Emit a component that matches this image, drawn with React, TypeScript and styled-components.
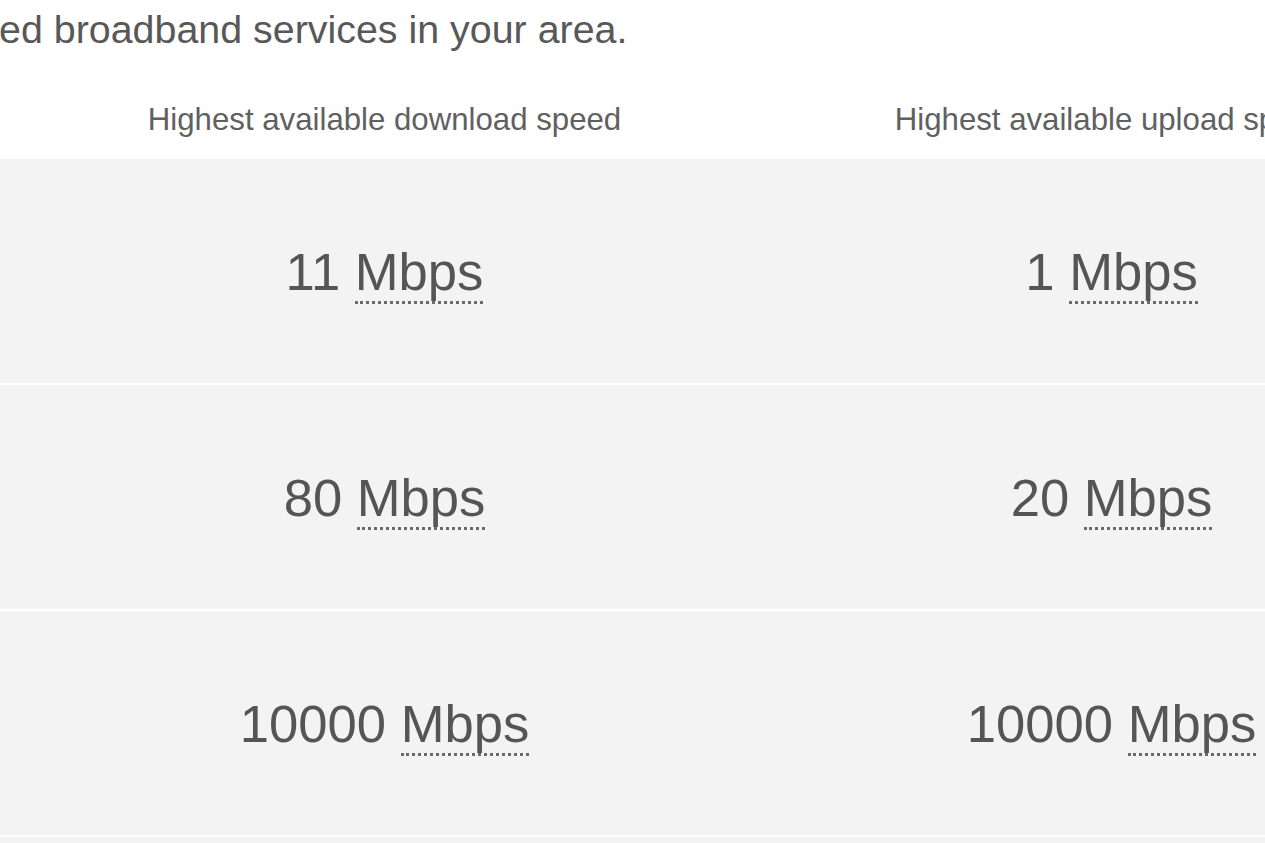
import React from "react";
import styled, { createGlobalStyle } from "styled-components";

const Global = createGlobalStyle`
  html, body {
    margin: 0;
    padding: 0;
    background: #ffffff;
    overflow: hidden;
  }
  body {
    font-family: "Liberation Sans", Arial, sans-serif;
    color: #555555;
  }
`;

const Page = styled.div`
  width: 1265px;
  height: 843px;
  overflow: hidden;
  display: flex;
  flex-direction: column;
`;

const Intro = styled.p`
  margin: 0;
  padding: 7px 0 0 0;
  margin-left: -1px;
  font-size: 39.4px;
  line-height: normal;
  color: #585858;
  white-space: nowrap;
`;

const Grid = styled.div`
  display: grid;
  grid-template-columns: 21px 727px 727px;
`;

const HeaderRow = styled(Grid)`
  padding: 50px 0 21px;
`;

const HeaderCell = styled.div<{ $col: number }>`
  grid-column: ${(p) => p.$col};
  text-align: center;
  font-size: 31.2px;
  line-height: normal;
  color: #606060;
  white-space: nowrap;
`;

const Rows = styled.div`
  display: flex;
  flex-direction: column;
  gap: 2px;
`;

const Row = styled(Grid)`
  height: 224px;
  background: #f3f3f3;
  align-items: center;
`;

const SpeedCell = styled.div<{ $col: number }>`
  grid-column: ${(p) => p.$col};
  text-align: center;
  font-size: 52.6px;
  line-height: normal;
  color: #555555;
  white-space: nowrap;
`;

const Unit = styled.abbr`
  text-decoration: none;
  border-bottom: 3px dotted #6a6a6a;
`;

const speeds = [
  { down: "11", up: "1" },
  { down: "80", up: "20" },
  { down: "10000", up: "10000" },
  { down: "", up: "" },
];

export default function App() {
  return (
    <Page>
      <Global />
      <Intro>ed broadband services in your area.</Intro>
      <HeaderRow>
        <HeaderCell $col={2}>Highest available download speed</HeaderCell>
        <HeaderCell $col={3}>Highest available upload speed</HeaderCell>
      </HeaderRow>
      <Rows>
        {speeds.map((s, i) => (
          <Row key={i}>
            {s.down && (
              <SpeedCell $col={2}>
                {s.down} <Unit title="Megabits per second">Mbps</Unit>
              </SpeedCell>
            )}
            {s.up && (
              <SpeedCell $col={3}>
                {s.up} <Unit title="Megabits per second">Mbps</Unit>
              </SpeedCell>
            )}
          </Row>
        ))}
      </Rows>
    </Page>
  );
}
